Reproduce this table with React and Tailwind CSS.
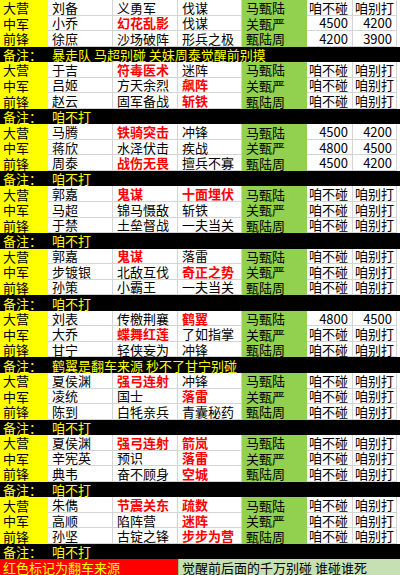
import React from "react";

const blocks = [
  {
    rows: [
      ["大营", "刘备", "义勇军", "伐谋", "马甄陆", "咱不碰", "咱别打"],
      ["中军", "小乔", "*幻花乱影", "伐谋", "关甄严", "4500", "4200"],
      ["前锋", "徐庶", "沙场破阵", "形兵之极", "甄陆周", "4200", "3900"],
    ],
    note: "暴走队 马超别碰 关妹周泰觉醒前别摸",
  },
  {
    rows: [
      ["大营", "于吉", "*符毒医术", "迷阵", "马甄陆", "咱不碰", "咱别打"],
      ["中军", "吕姬", "方天余烈", "*飙阵", "关甄严", "咱不碰", "咱别打"],
      ["前锋", "赵云", "固军备战", "*斩铁", "甄陆周", "咱不碰", "咱别打"],
    ],
    note: "咱不打",
  },
  {
    rows: [
      ["大营", "马腾", "*铁骑突击", "冲锋", "马甄陆", "4500", "4200"],
      ["中军", "蒋欣", "水泽伏击", "疾战", "关甄严", "4800", "4500"],
      ["前锋", "周泰", "*战伤无畏", "擅兵不寡", "甄陆周", "4500", "4200"],
    ],
    note: "咱不打",
  },
  {
    rows: [
      ["大营", "郭嘉", "*鬼谋", "*十面埋伏", "马甄陆", "咱不碰", "咱别打"],
      ["中军", "马超", "锦马慑敌", "斩铁", "关甄严", "咱不碰", "咱别打"],
      ["前锋", "于禁", "土垒督战", "一夫当关", "甄陆周", "咱不碰", "咱别打"],
    ],
    note: "咱不打",
  },
  {
    rows: [
      ["大营", "郭嘉", "*鬼谋", "落雷", "马甄陆", "咱不碰", "咱别打"],
      ["中军", "步镀银", "北敌互伐", "*奇正之势", "关甄严", "咱不碰", "咱别打"],
      ["前锋", "孙策", "小霸王", "一夫当关", "甄陆周", "咱不碰", "咱别打"],
    ],
    note: "咱不打",
  },
  {
    rows: [
      ["大营", "刘表", "传檄荆襄", "*鹤翼", "马甄陆", "4800", "4500"],
      ["中军", "大乔", "*蝶舞红莲", "了如指掌", "关甄严", "咱不碰", "咱别打"],
      ["前锋", "甘宁", "轻侠妄为", "冲锋", "甄陆周", "咱不碰", "咱别打"],
    ],
    note: "鹤翼是翻车来源 秒不了甘宁别碰",
  },
  {
    rows: [
      ["大营", "夏侯渊", "*强弓连射", "冲锋", "马甄陆", "咱不碰", "咱别打"],
      ["中军", "凌统", "国士", "*落雷", "关甄严", "咱不碰", "咱别打"],
      ["前锋", "陈到", "白牦亲兵", "青囊秘药", "甄陆周", "咱不碰", "咱别打"],
    ],
    note: "咱不打",
  },
  {
    rows: [
      ["大营", "夏侯渊", "*强弓连射", "*箭岚", "马甄陆", "咱不碰", "咱别打"],
      ["中军", "辛宪英", "预识", "*落雷", "关甄严", "咱不碰", "咱别打"],
      ["前锋", "典韦", "奋不顾身", "*空城", "甄陆周", "咱不碰", "咱别打"],
    ],
    note: "咱不打",
  },
  {
    rows: [
      ["大营", "朱儁", "*节震关东", "*疏数", "马甄陆", "咱不碰", "咱别打"],
      ["中军", "高顺", "陷阵营", "*迷阵", "关甄严", "咱不碰", "咱别打"],
      ["前锋", "孙坚", "古锭之锋", "*步步为营", "甄陆周", "咱不碰", "咱别打"],
    ],
    note: "咱不打",
  },
];

const font = { fontFamily: '"Noto Sans CJK SC", "DejaVu Sans", sans-serif' };

function Cell({ v, idx }) {
  const red = v.startsWith("*");
  const text = red ? v.slice(1) : v;
  const isNum = /^\d+$/.test(text);
  if (idx === 0) {
    return (
      <div className="bg-[#ffff00] flex items-center pl-[3px] text-[13px] leading-none text-black whitespace-nowrap">
        {text}
      </div>
    );
  }
  if (idx === 4) {
    return (
      <div className="bg-[#92d050] flex items-center pl-[4px] text-[13px] leading-none text-black whitespace-nowrap">
        {text}
      </div>
    );
  }
  return (
    <div
      className={
        "bg-white border-r border-b border-[#d4d4d4] flex items-center text-[13px] leading-none whitespace-nowrap " +
        (isNum ? "justify-end pr-[4px] " : idx >= 5 ? "pl-[2px] " : "pl-[4px] ") +
        (red ? "text-[#ff0000] font-semibold" : "text-black")
      }
    >
      {text}
    </div>
  );
}

export default function App() {
  return (
    <div
      className="w-[400px] h-[575px] bg-white grid grid-cols-[48px_65px_65px_64px_65px_46px_44px_3px] grid-rows-[repeat(37,minmax(0,1fr))] overflow-hidden"
      style={font}
    >
      {blocks.map((b, bi) => (
        <React.Fragment key={bi}>
          {b.rows.map((r, ri) => (
            <React.Fragment key={ri}>
              {r.map((v, ci) => (
                <Cell key={ci} v={v} idx={ci} />
              ))}
              <div className="bg-white" />
            </React.Fragment>
          ))}
          <div className="col-span-8 bg-black flex items-center text-[13px] leading-none text-[#ffff00] whitespace-nowrap">
            <span className="w-[48px] pl-[3px] shrink-0">备注：</span>
            <span className="pl-[4px]">{b.note}</span>
          </div>
        </React.Fragment>
      ))}
      <div className="col-span-3 bg-[#ff0000] flex items-center pl-[3px] text-[13px] leading-none text-[#ffff00] whitespace-nowrap">
        红色标记为翻车来源
      </div>
      <div className="col-span-5 bg-[#c6e0b4] border-l border-[#9fbf8a] flex items-center pl-[3px] text-[13px] leading-none text-black whitespace-nowrap">
        觉醒前后面的千万别碰 谁碰谁死
      </div>
    </div>
  );
}
